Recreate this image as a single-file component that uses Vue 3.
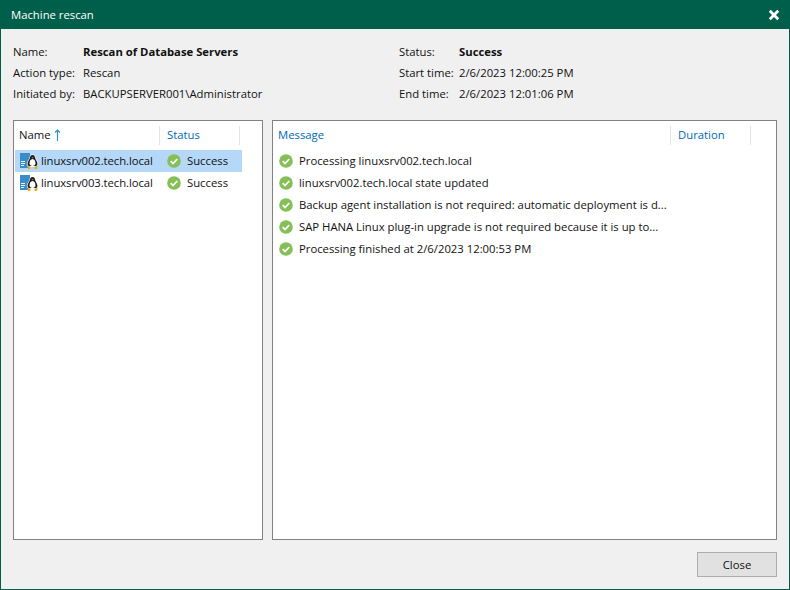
<script setup>
const left = [
  { name: 'linuxsrv002.tech.local', status: 'Success', selected: true },
  { name: 'linuxsrv003.tech.local', status: 'Success', selected: false },
]
const messages = [
  'Processing linuxsrv002.tech.local',
  'linuxsrv002.tech.local state updated',
  'Backup agent installation is not required: automatic deployment is d...',
  'SAP HANA Linux plug-in upgrade is not required because it is up to...',
  'Processing finished at 2/6/2023 12:00:53 PM',
]
</script>

<template>
  <div class="window">
    <header class="titlebar">
      <span class="title">Machine rescan</span>
      <svg class="close-x" width="12" height="12" viewBox="0 0 12 12">
        <path d="M1.8 1.8 L10.2 10.2 M10.2 1.8 L1.8 10.2" stroke="#fff" stroke-width="2.8" fill="none" />
      </svg>
    </header>

    <main class="body">
      <section class="info">
        <div class="info-col col-a">
          <div class="info-row"><span class="lbl">Name:</span><b>Rescan of Database Servers</b></div>
          <div class="info-row"><span class="lbl">Action type:</span><span>Rescan</span></div>
          <div class="info-row"><span class="lbl">Initiated by:</span><span>BACKUPSERVER001\Administrator</span></div>
        </div>
        <div class="info-col col-b">
          <div class="info-row"><span class="lbl">Status:</span><b>Success</b></div>
          <div class="info-row"><span class="lbl">Start time:</span><span>2/6/2023 12:00:25 PM</span></div>
          <div class="info-row"><span class="lbl">End time:</span><span>2/6/2023 12:01:06 PM</span></div>
        </div>
      </section>

      <section class="panels">
        <div class="panel panel-left">
          <div class="head">
            <div class="hcell h-name">
              <span class="dark">Name</span>
              <svg class="sort" width="7" height="12" viewBox="0 0 7 12">
                <path d="M3.5 12 V1 M1 3.5 L3.5 1 L6 3.5" stroke="#2f8fd3" stroke-width="1.2" fill="none" />
              </svg>
            </div>
            <div class="hcell h-status">Status</div>
          </div>
          <div v-for="r in left" :key="r.name" class="lrow" :class="{ selected: r.selected }">
            <span class="l-name">
              <svg class="srv" width="18" height="18" viewBox="0 0 18 18">
                <rect x="0" y="1" width="10" height="15" fill="#3a8cc8" />
                <path d="M1 9.500h4M1 11.500h4M1 13.500h3" stroke="#e6f1f9" stroke-width="1" />
                <path d="M12.500 2.500c-2 0-3 1.400-3 3 0 1.400-2.500 3.600-2.700 6-.1 1.400.6 2.500 1.700 3.500h8c1.100-1 1.800-2.100 1.700-3.500-.2-2.400-2.700-4.600-2.700-6 0-1.600-1-3-3-3z" fill="#fff" opacity="0.9" />
                <path d="M12.500 3c-1.600 0-2.500 1.200-2.500 2.700 0 1.300-2.200 3.300-2.400 5.700-.1 1 .3 1.900 1.100 2.600h7.600c.8-.7 1.200-1.600 1.100-2.600-.2-2.400-2.400-4.400-2.400-5.700C15 4.200 14.100 3 12.500 3z" fill="#1d1d1d" />
                <path d="M12.500 7c-1.800 0-3 2.200-3 4.300 0 1.700 1.300 2.700 3 2.700s3-1 3-2.700c0-2.100-1.200-4.300-3-4.300z" fill="#fff" />
                <path d="M11.500 5.300h2l-1 1.300z" fill="#f0a81e" />
                <path d="M7.300 13.500l3.200 1.200V17H8zM17.700 13.500l-3.200 1.200V17H17z" fill="#f0a81e" />
              </svg>
              <span class="txt">{{ r.name }}</span>
            </span>
            <span class="l-status">
              <svg class="ok" width="14" height="14" viewBox="0 0 14 14">
                <circle cx="7" cy="7" r="6.800" fill="#85bf55" />
                <path d="M3.700 7.200 L6 9.500 L10.300 5" stroke="#fff" stroke-width="1.800" fill="none" />
              </svg>
              <span class="txt">{{ r.status }}</span>
            </span>
          </div>
        </div>

        <div class="panel panel-right">
          <div class="head">
            <div class="hcell h-msg">Message</div>
            <div class="hcell h-dur">Duration</div>
          </div>
          <div class="msgs">
            <div v-for="m in messages" :key="m" class="mrow">
              <svg class="ok" width="14" height="14" viewBox="0 0 14 14">
                <circle cx="7" cy="7" r="6.800" fill="#85bf55" />
                <path d="M3.700 7.200 L6 9.500 L10.300 5" stroke="#fff" stroke-width="1.800" fill="none" />
              </svg>
              <span class="txt">{{ m }}</span>
            </div>
          </div>
        </div>
      </section>

      <footer class="foot">
        <button class="btn" type="button">Close</button>
      </footer>
    </main>
  </div>
</template>

<style>
html, body { margin: 0; padding: 0; background: #f0f0f0; }
</style>

<style scoped>
.window {
  width: 790px;
  height: 590px;
  box-sizing: border-box;
  border: 1px solid #005f4b;
  border-top: 0;
  display: flex;
  flex-direction: column;
  background: #f0f0f0;
  font-family: "Open Sans", "Noto Sans", sans-serif;
  font-size: 11.3px;
  color: #111;
  overflow: hidden;
}
.titlebar {
  height: 29px;
  flex: none;
  background: #005f4b;
  color: #fff;
  display: flex;
  align-items: center;
  justify-content: space-between;
  padding: 0 9px 0 10px;
}
.title { font-size: 11.3px; }
.body {
  flex: 1;
  display: flex;
  flex-direction: column;
  padding: 0 12px 12px 12px;
}
.info {
  display: flex;
  flex: none;
  padding-top: 12px;
  height: 91px;
  box-sizing: border-box;
}
.col-a { width: 386px; }
.col-a .lbl { width: 70px; }
.col-b .lbl { width: 60px; }
.info-row {
  display: flex;
  align-items: center;
  height: 21px;
  white-space: nowrap;
}
.info-row b { font-weight: 700; }
.lbl { flex: none; }
.panels {
  height: 420px;
  flex: none;
  display: flex;
  gap: 9px;
}
.panel {
  box-sizing: border-box;
  background: #fff;
  border: 1px solid #828282;
  height: 100%;
}
.panel-left { width: 250px; }
.panel-right { width: 505px; }
.head {
  height: 29px;
  display: flex;
  align-items: flex-end;
  box-sizing: border-box;
}
.hcell {
  height: 19px;
  display: flex;
  align-items: center;
  color: #0068b8;
  box-sizing: border-box;
  margin-bottom: 5px;
  padding-bottom: 2px;
}
.dark { color: #111; }
.sort { margin-left: 3px; }
.h-name { width: 146px; padding-left: 5px; border-right: 1px solid #e3e5e7; }
.h-status { width: 80px; padding-left: 7px; border-right: 1px solid #e3e5e7; }
.h-msg { width: 398px; padding-left: 5px; border-right: 1px solid #e3e5e7; }
.h-dur { width: 80px; padding-left: 7px; border-right: 1px solid #e3e5e7; }
.txt { margin-bottom: 2px; }
.lrow {
  height: 22px;
  margin-left: 1px;
  width: 227px;
  display: flex;
  align-items: center;
  white-space: nowrap;
}
.lrow.selected { background: #b5d7f8; }
.l-name {
  width: 144px;
  display: flex;
  align-items: center;
  gap: 3px;
  padding-left: 5px;
  box-sizing: border-box;
  letter-spacing: -0.07px;
}
.l-status {
  display: flex;
  align-items: center;
  gap: 6px;
  padding-left: 8px;
}
.mrow {
  height: 22px;
  display: flex;
  align-items: center;
  gap: 6px;
  padding-left: 6px;
  white-space: nowrap;
}
.ok, .srv, .close-x, .sort { flex: none; display: block; }
.foot {
  flex: 1;
  display: flex;
  justify-content: flex-end;
  align-items: flex-start;
  padding-top: 12px;
}
.btn {
  width: 80px;
  height: 25px;
  box-sizing: border-box;
  background: #e1e1e1;
  border: 1px solid #adadad;
  font: inherit;
  color: #111;
  padding: 0;
}
</style>
